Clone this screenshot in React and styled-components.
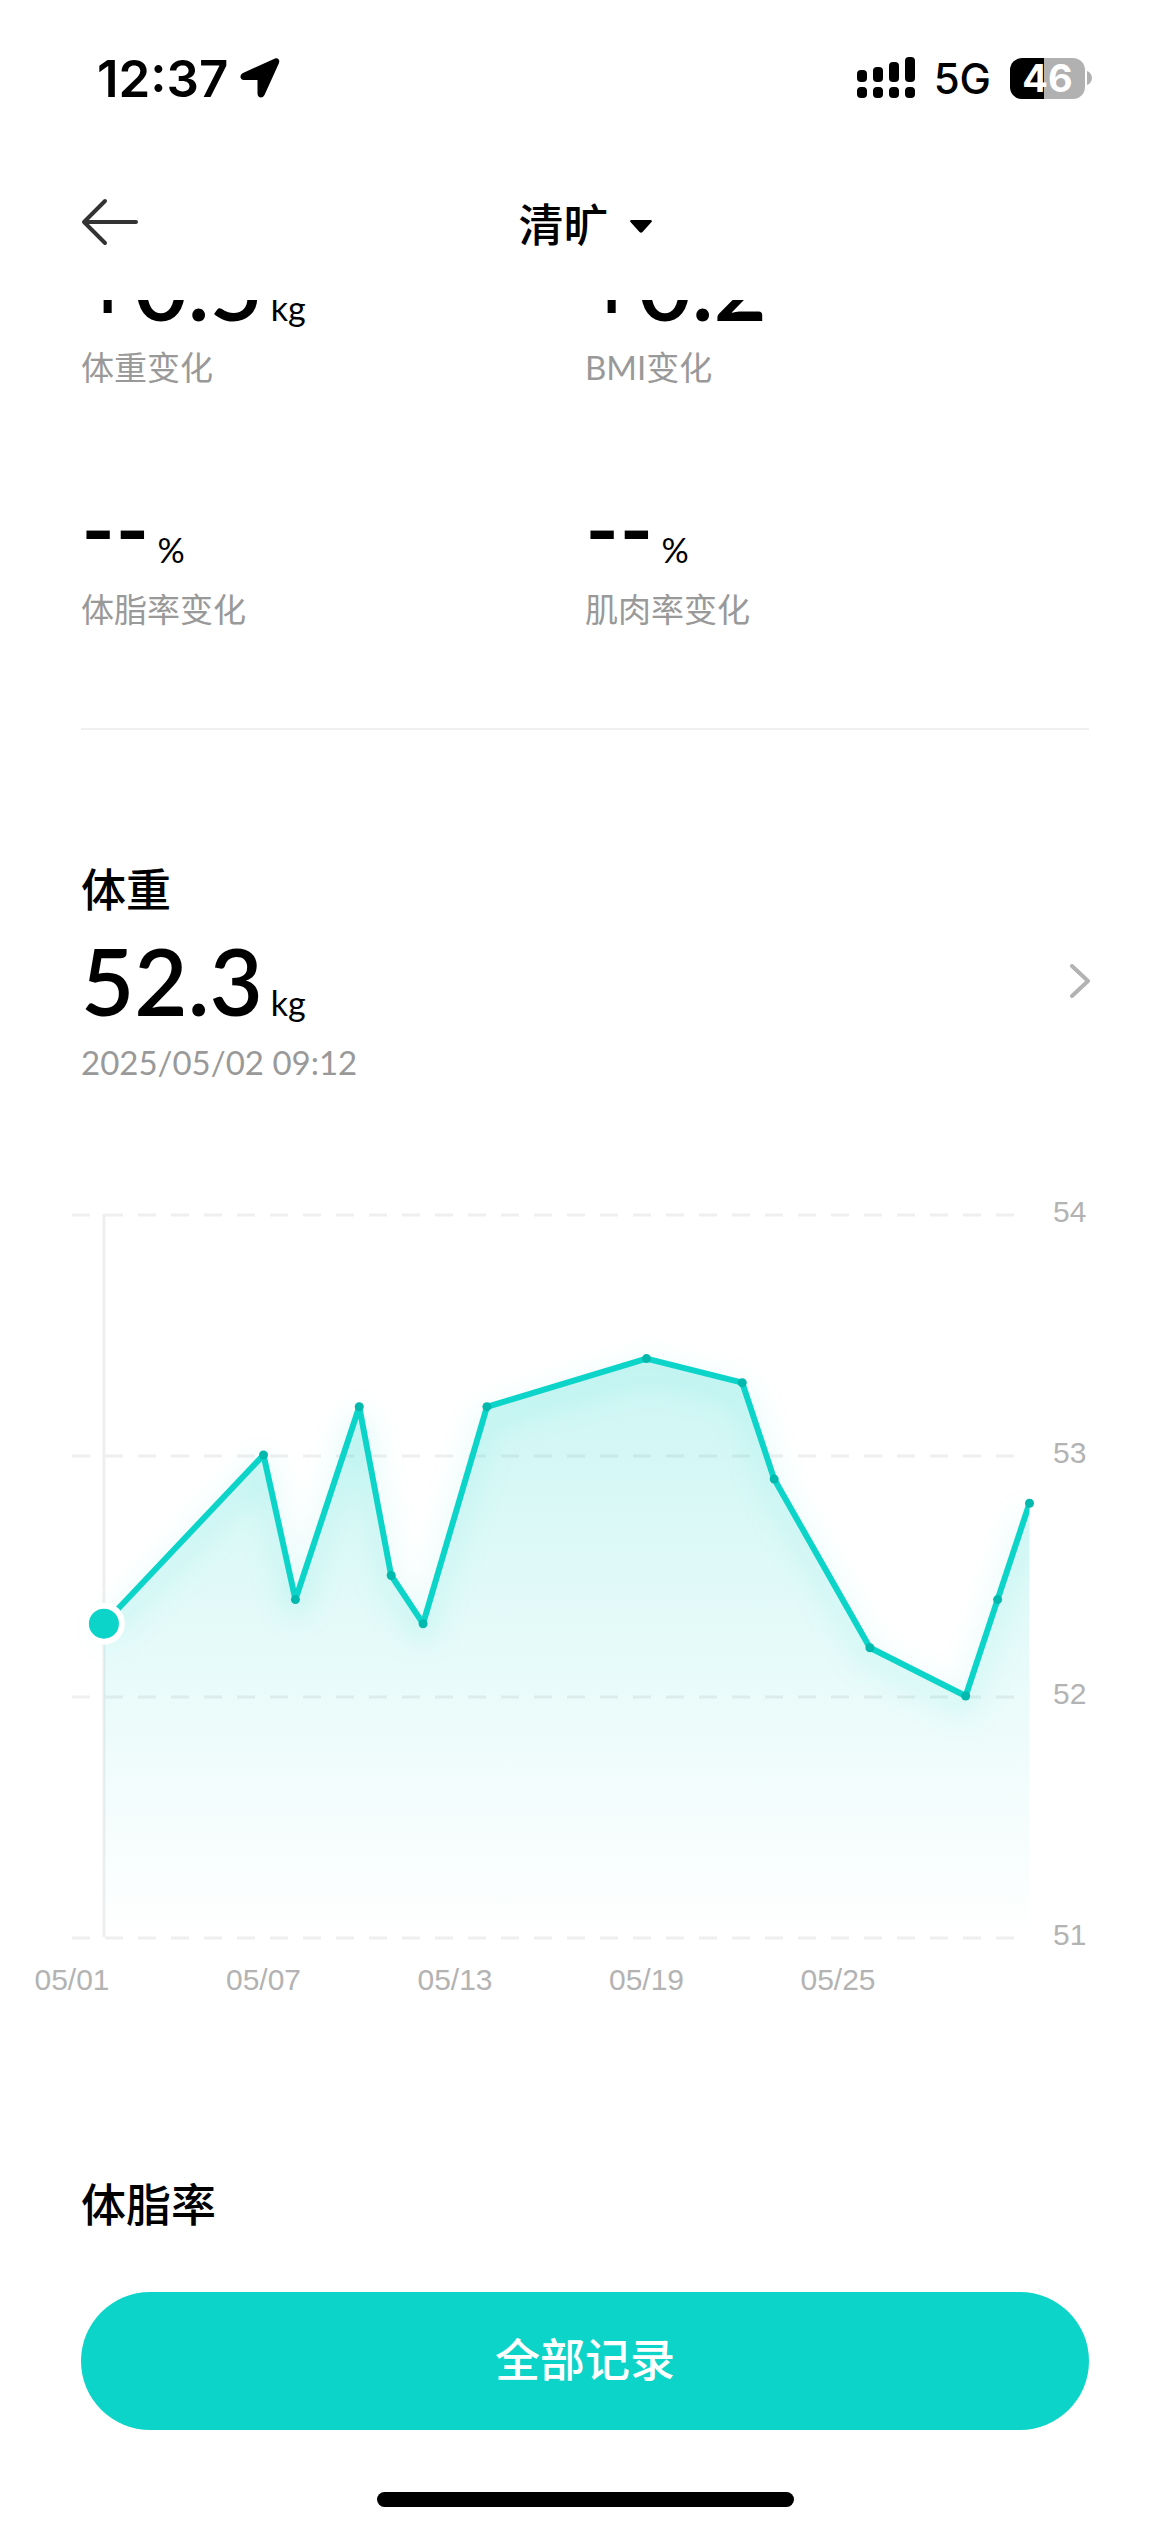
import React from "react";
import { createGlobalStyle, styled } from "styled-components";

const changes = [
  { label: "体重变化", value: "+0.5", unit: "kg" },
  { label: "BMI变化", value: "+0.2" },
  { label: "体脂率变化", value: "--", unit: "%" },
  { label: "肌肉率变化", value: "--", unit: "%" },
];

const records = [
  { day: 2, weight: 52.3 },
  { day: 7, weight: 53 },
  { day: 8, weight: 52.4 },
  { day: 10, weight: 53.2 },
  { day: 11, weight: 52.5 },
  { day: 12, weight: 52.3 },
  { day: 14, weight: 53.2 },
  { day: 19, weight: 53.4 },
  { day: 22, weight: 53.3 },
  { day: 23, weight: 52.9 },
  { day: 26, weight: 52.2 },
  { day: 29, weight: 52 },
  { day: 30, weight: 52.4 },
  { day: 31, weight: 52.8 },
];

const dayTicks = [1, 7, 13, 19, 25];
const weightTicks = [54, 53, 52, 51];

// chart scales, in viewBox units
const dayX = (day) => 72 + ((day - 1) * 383) / 12;
const weightY = (weight) => 748 - (weight - 51) * 241;

function WeightChart() {
  const points = records.map((r) => ({
    x: dayX(r.day),
    y: weightY(r.weight),
  }));
  const line = points.map((p) => `${p.x},${p.y}`).join(" ");
  const first = points[0];
  const last = points[points.length - 1];
  const bottom = weightY(51);
  const peak = Math.min(...points.map((p) => p.y));

  return (
    <Chart viewBox="0 0 1170 820" role="img" aria-label="体重">
      <defs>
        <linearGradient
          id="area"
          gradientUnits="userSpaceOnUse"
          x1="0"
          x2="0"
          y1={peak}
          y2={bottom}
        >
          <stop offset="0" stopColor="#0dd4c8" stopOpacity="0.21" />
          <stop offset="1" stopColor="#0dd4c8" stopOpacity="0" />
        </linearGradient>
        <filter id="glow" x="-10%" y="-20%" width="120%" height="150%">
          <feDropShadow
            dx="0"
            dy="12"
            stdDeviation="15"
            floodColor="#0dd4c8"
            floodOpacity="0.32"
          />
        </filter>
        <clipPath id="plot">
          <rect x="0" y="0" width={last.x} height="820" />
        </clipPath>
      </defs>

      {weightTicks.map((tick) => (
        <g key={tick}>
          <GridLine
            x1="72"
            x2="1014"
            y1={weightY(tick) + 1}
            y2={weightY(tick) + 1}
          />
          <TickText x="1053" y={weightY(tick) + 8}>
            {tick}
          </TickText>
        </g>
      ))}
      {dayTicks.map((day) => (
        <TickText key={day} x={dayX(day)} y="801" textAnchor="middle">
          {`05/${String(day).padStart(2, "0")}`}
        </TickText>
      ))}

      <Cursor x1={first.x} x2={first.x} y1={weightY(54)} y2={bottom} />
      <polygon
        points={`${first.x},${bottom} ${line} ${last.x},${bottom}`}
        fill="url(#area)"
      />
      <g clipPath="url(#plot)">
        <Line points={line} filter="url(#glow)" />
      </g>
      {points.slice(1).map((p) => (
        <Dot key={p.x} cx={p.x} cy={p.y} r="4.5" />
      ))}
      <circle cx={first.x} cy={first.y} r="21" fill="#fff" />
      <circle cx={first.x} cy={first.y} r="15" fill="#0dd4c8" />
    </Chart>
  );
}

function Measure({ value, unit }) {
  return (
    <Value>
      {value}
      {unit && <Unit>{unit}</Unit>}
    </Value>
  );
}

function StatusIcons() {
  return (
    <StatusGroup>
      <svg width="58" height="42" viewBox="0 0 58 42" aria-hidden="true">
        {[13, 10, 5, 0].map((top, i) => (
          <g key={top}>
            <rect x={i * 16} y={top} width="10" height={25 - top} rx="4" />
            <rect x={i * 16} y="30" width="10" height="11" rx="4" />
          </g>
        ))}
      </svg>
      <Network>5G</Network>
      <Battery>
        <Charge>46</Charge>
        <svg width="5" height="14" viewBox="0 0 5 14" aria-hidden="true">
          <path d="M0 0C3 1 5 4 5 7s-2 6-5 7z" fill="#b1b1b1" />
        </svg>
      </Battery>
    </StatusGroup>
  );
}

function App() {
  return (
    <Page>
      <GlobalStyle />
      <StatusBar>
        <Clock>
          12:37
          <svg width="40" height="40" viewBox="0 0 40 40" aria-hidden="true">
            <path
              d="M35 .5 3 15C-1 17 0 22 4 22h13.500v13.500c0 4.500 5 5.500 7 1.500L39 5c1.200-3-1-5.700-4-4.500z"
              fill="#000"
            />
          </svg>
        </Clock>
        <StatusIcons />
      </StatusBar>

      <Header>
        <BackButton type="button" aria-label="返回">
          <svg width="58" height="48" viewBox="0 0 58 48" aria-hidden="true">
            <path
              d="M24 3 3 24l21 21M3 24h52"
              fill="none"
              stroke="#333"
              strokeWidth="4"
              strokeLinecap="round"
              strokeLinejoin="round"
            />
          </svg>
        </BackButton>
        <UserButton type="button">
          清旷
          <svg width="22" height="13" viewBox="0 0 22 13" aria-hidden="true">
            <path d="M1 0h20q1.500 1 .5 2L12.500 12q-1.500 1.500-3 0L.5 2Q-.5 1 1 0z" />
          </svg>
        </UserButton>
      </Header>

      <Main>
        <Scrolled>
          <Changes>
            {changes.map((item) => (
              <div key={item.label}>
                <Measure value={item.value} unit={item.unit} />
                <Label>{item.label}</Label>
              </div>
            ))}
          </Changes>
          <Summary href="#weight">
            <div>
              <Title>体重</Title>
              <Measure value="52.3" unit="kg" />
              <Label>2025/05/02 09:12</Label>
            </div>
            <svg width="22" height="34" viewBox="0 0 22 34" aria-hidden="true">
              <path
                d="m3 2 16 15L3 32"
                fill="none"
                stroke="#b3b3b3"
                strokeWidth="4"
                strokeLinecap="round"
                strokeLinejoin="round"
              />
            </svg>
          </Summary>
          <WeightChart />
          <FatSection>
            <Title>体脂率</Title>
          </FatSection>
        </Scrolled>
      </Main>

      <Footer>
        <AllRecords type="button">全部记录</AllRecords>
        <HomeIndicator />
      </Footer>
    </Page>
  );
}

export default App;

const GlobalStyle = createGlobalStyle`
  * {
    box-sizing: border-box;
  }
  body {
    margin: 0;
    background: #fff;
    color: #000;
    font-family: Lato, "Noto Sans CJK SC", sans-serif;
  }
  button {
    border: 0;
    padding: 0;
    background: none;
    color: inherit;
    font-family: inherit;
  }
`;

const Page = styled.div`
  display: flex;
  flex-direction: column;
  height: 100vh;
`;

const StatusBar = styled.div`
  display: flex;
  align-items: center;
  justify-content: space-between;
  height: 156px;
  padding: 0 78px 0 97px;
  font-family: Inter, sans-serif;
`;

const Clock = styled.div`
  display: flex;
  align-items: center;
  gap: 12px;
  font-size: 51px;
  font-weight: 600;
`;

const StatusGroup = styled.div`
  display: flex;
  align-items: center;
  gap: 19px;
`;

const Network = styled.span`
  font-size: 42px;
  font-weight: 500;
`;

const Battery = styled.div`
  display: flex;
  align-items: center;
  gap: 2px;
`;

const Charge = styled.span`
  width: 75px;
  border-radius: 12px;
  background: linear-gradient(90deg, #000 46%, #b1b1b1 46%);
  color: #fff;
  font-size: 38px;
  font-weight: 700;
  line-height: 41px;
  text-align: center;
`;

const Header = styled.header`
  display: grid;
  grid-template-columns: 1fr auto 1fr;
  align-items: center;
  height: 132px;
  margin-bottom: 12px;
  padding: 0 81px;
`;

const BackButton = styled.button`
  justify-self: start;
  display: flex;
`;

const UserButton = styled.button`
  display: flex;
  align-items: center;
  gap: 21px;
  font-size: 45px;
  font-weight: 500;

  > svg {
    margin-top: 8px;
  }
`;

const Main = styled.main`
  flex: 1;
  min-height: 0;
  overflow: hidden;
`;

/* content is scrolled up under the header */
const Scrolled = styled.div`
  display: flow-root;
  margin-top: -64px;
`;

const Changes = styled.section`
  display: grid;
  grid-template-columns: 1fr 1fr;
  row-gap: 88px;
  margin: 0 81px;
  padding-bottom: 96px;
  border-bottom: 2px solid #efefef;
`;

const Value = styled.div`
  font-size: 92px;
  font-weight: 600;
  line-height: 100px;
`;

const Unit = styled.span`
  margin-left: 8px;
  font-size: 34px;
  font-weight: 400;
  line-height: 1;
`;

const Label = styled.div`
  margin-top: 8px;
  color: #999;
  font-size: 33px;
  line-height: 46px;
`;

const Title = styled.h2`
  margin: 0 0 8px;
  font-size: 45px;
  font-weight: 500;
  line-height: 66px;
`;

const Summary = styled.a`
  display: flex;
  align-items: center;
  justify-content: space-between;
  padding: 127px 79px 0 81px;
  color: inherit;
  text-decoration: none;

  > svg {
    margin-top: 20px;
  }
`;

const Chart = styled.svg`
  display: block;
  width: 100%;
  height: auto;
  margin-top: 104px;
`;

const GridLine = styled.line`
  stroke: #efefef;
  stroke-width: 3;
  stroke-dasharray: 18 15;
`;

const Cursor = styled.line`
  stroke: #efefef;
  stroke-width: 3;
`;

const TickText = styled.text`
  fill: #b3b3b3;
  font-family: "Liberation Sans", Arial, sans-serif;
  font-size: 30px;
`;

const Line = styled.polyline`
  fill: none;
  stroke: #0dd4c8;
  stroke-width: 6;
  stroke-linejoin: round;
`;

const Dot = styled.circle`
  fill: #03b8ad;
`;

const FatSection = styled.section`
  padding: 163px 81px 0;
`;

const Footer = styled.footer`
  display: flex;
  flex-direction: column;
  align-items: center;
  gap: 62px;
  padding: 42px 81px 25px;
`;

const AllRecords = styled.button`
  width: 100%;
  height: 138px;
  padding-bottom: 8px;
  border-radius: 69px;
  background: #0dd4c8;
  color: #fff;
  font-size: 45px;
  font-weight: 500;
`;

const HomeIndicator = styled.div`
  width: 417px;
  height: 15px;
  border-radius: 8px;
  background: #000;
`;
